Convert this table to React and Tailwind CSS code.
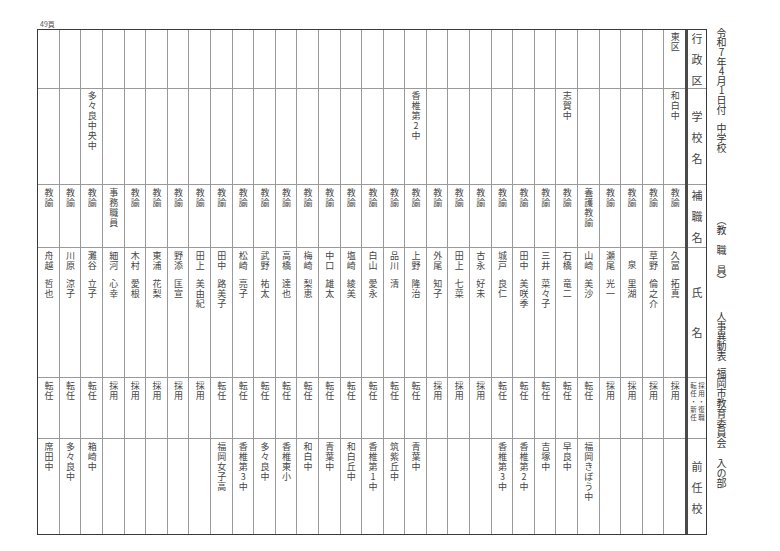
import React from "react";

// right-to-left order, as on the sheet
const rows = [
  { ku: "東区", school: "和白中", post: "教諭", sei: "久冨", mei: "拓真", type: "採用" },
  { post: "教諭", sei: "草野", mei: "倫之介", type: "採用" },
  { post: "教諭", sei: "泉", mei: "里湖", type: "採用" },
  { post: "教諭", sei: "瀬尾", mei: "光一", type: "採用" },
  { post: "養護教諭", sei: "山崎", mei: "美沙", type: "転任", prev: "福岡きぼう中" },
  { school: "志賀中", post: "教諭", sei: "石橋", mei: "竜二", type: "転任", prev: "早良中" },
  { post: "教諭", sei: "三井", mei: "菜々子", type: "転任", prev: "吉塚中" },
  { post: "教諭", sei: "田中", mei: "美咲季", type: "転任", prev: "香椎第2中" },
  { post: "教諭", sei: "城戸", mei: "良仁", type: "転任", prev: "香椎第3中" },
  { post: "教諭", sei: "古永", mei: "好未", type: "採用" },
  { post: "教諭", sei: "田上", mei: "七菜", type: "採用" },
  { post: "教諭", sei: "外尾", mei: "知子", type: "採用" },
  { school: "香椎第2中", post: "教諭", sei: "上野", mei: "隆治", type: "転任", prev: "青葉中" },
  { post: "教諭", sei: "品川", mei: "清", type: "転任", prev: "筑紫丘中" },
  { post: "教諭", sei: "白山", mei: "愛永", type: "転任", prev: "香椎第1中" },
  { post: "教諭", sei: "塩崎", mei: "綾美", type: "転任", prev: "和白丘中" },
  { post: "教諭", sei: "中口", mei: "雄太", type: "転任", prev: "青葉中" },
  { post: "教諭", sei: "梅崎", mei: "梨恵", type: "転任", prev: "和白中" },
  { post: "教諭", sei: "高橋", mei: "達也", type: "転任", prev: "香椎東小" },
  { post: "教諭", sei: "武野", mei: "祐太", type: "転任", prev: "多々良中" },
  { post: "教諭", sei: "松崎", mei: "亮子", type: "転任", prev: "香椎第3中" },
  { post: "教諭", sei: "田中", mei: "路美子", type: "転任", prev: "福岡女子高" },
  { post: "教諭", sei: "田上", mei: "美由紀", type: "採用" },
  { post: "教諭", sei: "野添", mei: "匡宣", type: "採用" },
  { post: "教諭", sei: "東浦", mei: "花梨", type: "採用" },
  { post: "教諭", sei: "木村", mei: "愛根", type: "採用" },
  { post: "事務職員", sei: "細河", mei: "心幸", type: "採用" },
  { school: "多々良中央中", post: "教諭", sei: "灘谷", mei: "立子", type: "転任", prev: "箱崎中" },
  { post: "教諭", sei: "川原", mei: "涼子", type: "転任", prev: "多々良中" },
  { post: "教諭", sei: "舟越", mei: "哲也", type: "転任", prev: "席田中" },
];

function V({ children, className = "" }) {
  return (
    <span
      className={`[writing-mode:vertical-rl] [text-orientation:upright] text-[9px] leading-[10px] tracking-[1px] ${className}`}
    >
      {children}
    </span>
  );
}

function HeadChars({ chars, className }) {
  return (
    <div className={`flex flex-col items-center text-[11px] leading-[11px] ${className}`}>
      {chars.map((c) => (
        <span key={c}>{c}</span>
      ))}
    </div>
  );
}

function DataColumn({ r, last }) {
  return (
    <div className={`flex-1 flex flex-col ${last ? "" : "border-l border-[#9a9a9a]"}`}>
      <div className="h-[59px] border-b border-[#9a9a9a] flex justify-center pt-[2px]">
        {r.ku && <V>{r.ku}</V>}
      </div>
      <div className="h-[96px] border-b border-[#9a9a9a] flex justify-center pt-[2px]">
        {r.school && <V>{r.school}</V>}
      </div>
      <div className="h-[63px] border-b border-[#9a9a9a] flex justify-center pt-[3px]">
        <V>{r.post}</V>
      </div>
      <div className="h-[130px] border-b border-[#9a9a9a] flex flex-col items-center pt-[3px]">
        <div className="h-[28px]">
          <V>{r.sei}</V>
        </div>
        <V>{r.mei}</V>
      </div>
      <div className="h-[61px] border-b border-[#9a9a9a] flex justify-center pt-[3px]">
        <V>{r.type}</V>
      </div>
      <div className="flex-1 flex justify-center pt-[3px]">{r.prev && <V>{r.prev}</V>}</div>
    </div>
  );
}

export default function App() {
  return (
    <div
      className="w-[780px] h-[551px] bg-white text-[#454545] pl-[37px] flex"
      style={{ fontFamily: '"Noto Sans CJK JP", "Noto Sans", sans-serif' }}
    >
      <div className="w-[670px] shrink-0 flex flex-col">
        <div className="h-[29px] flex items-end pb-[1px] pl-[3px] text-[7px] leading-[8px] text-[#555]">
          49頁
        </div>
        <div className="h-[506px] border border-[#3a3a3a] flex flex-row-reverse">
          <div className="w-[21px] shrink-0 border-l-[3px] border-[#4a4a4a] flex flex-col text-[#444]">
            <div className="h-[59px] border-b border-[#9a9a9a] pt-[3px]">
              <HeadChars chars={["行", "政", "区"]} className="gap-[10px]" />
            </div>
            <div className="h-[96px] border-b border-[#9a9a9a] pt-[22px]">
              <HeadChars chars={["学", "校", "名"]} className="gap-[10px]" />
            </div>
            <div className="h-[63px] border-b border-[#9a9a9a] pt-[5px]">
              <HeadChars chars={["補", "職", "名"]} className="gap-[10px]" />
            </div>
            <div className="h-[130px] border-b border-[#9a9a9a] pt-[39px]">
              <HeadChars chars={["氏", "名"]} className="gap-[29px]" />
            </div>
            <div className="h-[61px] border-b border-[#9a9a9a] pt-[4px] flex flex-row-reverse justify-center gap-[1px]">
              <span className="[writing-mode:vertical-rl] [text-orientation:upright] text-[6.5px] leading-[7px] tracking-[1.5px]">
                採用・復職
              </span>
              <span className="[writing-mode:vertical-rl] [text-orientation:upright] text-[6.5px] leading-[7px] tracking-[1.5px]">
                転任・新任
              </span>
            </div>
            <div className="flex-1 pt-[22px]">
              <HeadChars chars={["前", "任", "校"]} className="gap-[10px]" />
            </div>
          </div>
          {rows.map((r, i) => (
            <DataColumn key={i} r={r} last={i === rows.length - 1} />
          ))}
        </div>
      </div>
      <div className="ml-[9px] pt-[28px] flex flex-col items-center text-[10px] leading-[11px] text-[#333]">
        <span className="[writing-mode:vertical-rl] [text-orientation:upright] tracking-[-0.4px]">
          令和7年4月1日付
        </span>
        <span className="[writing-mode:vertical-rl] mt-[9px]">中学校</span>
        <span className="[writing-mode:vertical-rl] mt-[62px]">（教　職　員）</span>
        <span className="[writing-mode:vertical-rl] mt-[26px]">人事異動表</span>
        <span className="[writing-mode:vertical-rl] mt-[7px]">福岡市教育委員会　入の部</span>
      </div>
    </div>
  );
}
